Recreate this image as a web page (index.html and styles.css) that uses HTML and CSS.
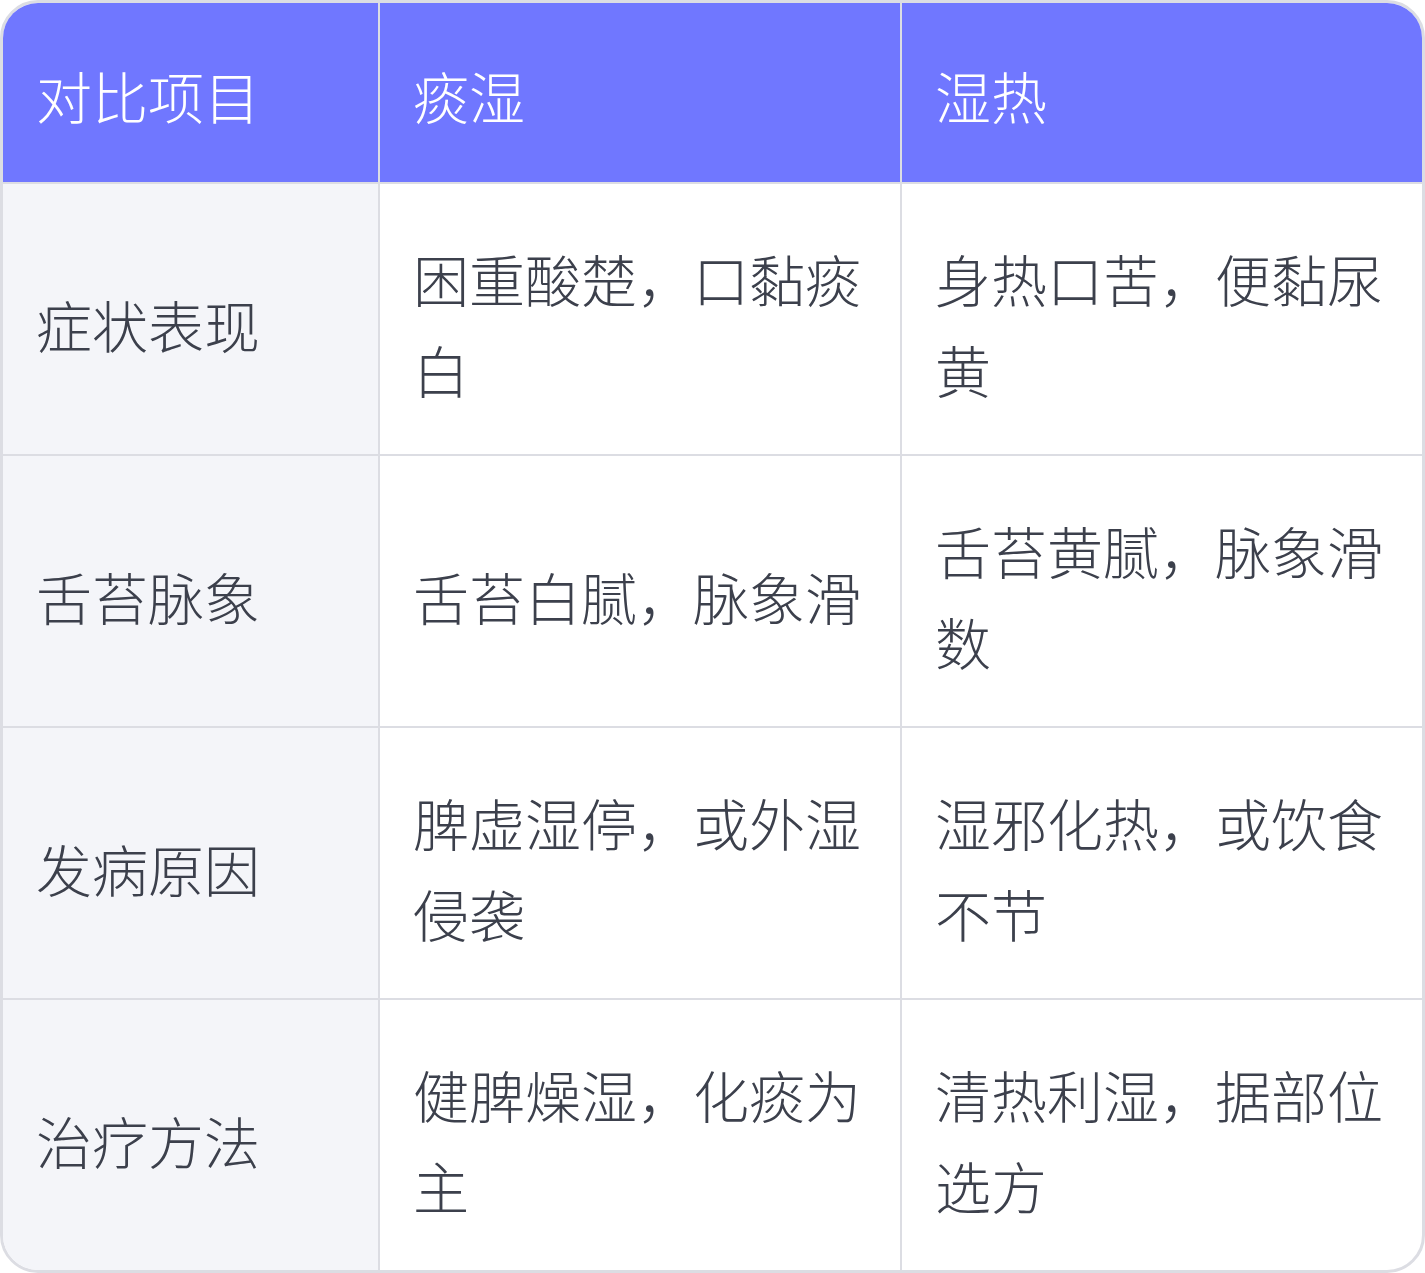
FILE: index.html
```html
<!DOCTYPE html>
<html lang="zh-CN">
<head>
<meta charset="utf-8">
<title>痰湿与湿热对比</title>
<link rel="stylesheet" href="styles.css">
</head>
<body>
<div class="card">
  <table class="cmp">
    <colgroup>
      <col class="c1"><col class="c2"><col class="c3">
    </colgroup>
    <thead>
      <tr><th>对比项目</th><th>痰湿</th><th>湿热</th></tr>
    </thead>
    <tbody>
      <tr><td class="item">症状表现</td><td>困重酸楚，口黏痰白</td><td>身热口苦，便黏尿黄</td></tr>
      <tr><td class="item">舌苔脉象</td><td>舌苔白腻，脉象滑</td><td>舌苔黄腻，脉象滑数</td></tr>
      <tr><td class="item">发病原因</td><td>脾虚湿停，或外湿侵袭</td><td>湿邪化热，或饮食不节</td></tr>
      <tr><td class="item">治疗方法</td><td>健脾燥湿，化痰为主</td><td>清热利湿，据部位选方</td></tr>
    </tbody>
  </table>
</div>
</body>
</html>
```
FILE: styles.css
```css
html, body {
  margin: 0;
  padding: 0;
  background: #ffffff;
}
body {
  font-family: "Noto Sans CJK SC", "Noto Sans", sans-serif;
}
.card {
  width: 1425px;
  height: 1273px;
  box-sizing: border-box;
  border: 3px solid #dcdde3;
  border-radius: 38px;
  overflow: hidden;
  background: #ffffff;
}
.cmp {
  width: 100%;
  border-collapse: collapse;
  table-layout: fixed;
}
.c1 { width: 376px; }
.c2 { width: 522px; }
.c3 { width: auto; }
.cmp th,
.cmp td {
  font-size: 56px;
  line-height: 91px;
  font-weight: 300;
  text-align: left;
  vertical-align: middle;
  padding: 44px 32px 44px 33px;
  border: 2px solid #dcdde3;
}
.cmp tr > :first-child { border-left: none; }
.cmp tr > :last-child { border-right: none; }
.cmp thead th { border-top: none; }
.cmp tbody tr:last-child td { border-bottom: none; }
.cmp th {
  background: #7077ff;
  color: #ffffff;
  height: 90px;
  padding-top: 46px;
  padding-bottom: 42px;
}
.cmp td {
  color: #3c404c;
  height: 184px;
  padding-top: 47px;
  padding-bottom: 39px;
}
.cmp td.item {
  background: #f4f5f9;
}
```
